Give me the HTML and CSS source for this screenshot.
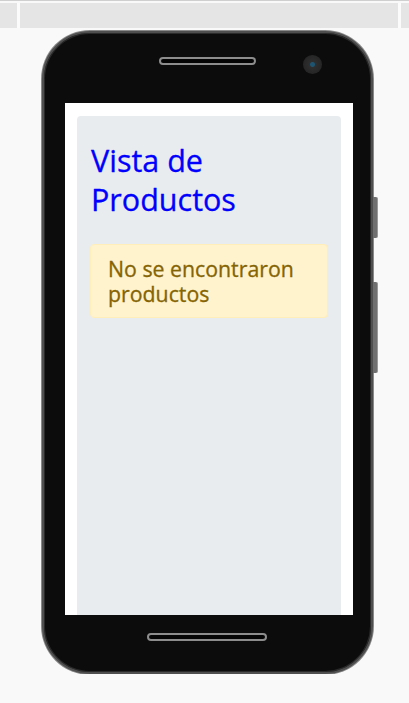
FILE: index.html
```html
<!DOCTYPE html>
<html lang="es">
<head>
    <meta charset="UTF-8">
    <meta name="viewport" content="width=device-width, initial-scale=1.0">
    <title>Vista de Productos</title>
    <link rel="stylesheet" href="styles.css">
</head>
<body>
    <!-- Device toolbar strip -->
    <div class="toolbar">
        <div class="toolbar-bar"></div>
    </div>

    <!-- Phone mockup -->
    <div class="stage">
        <div class="phone">
            <span class="speaker top"></span>
            <span class="camera"></span>
            <span class="side-btn volume"></span>
            <span class="side-btn power"></span>

            <div class="screen">
                <div class="jumbotron">
                    <h1 class="title">Vista de Productos</h1>
                    <div class="alert">No se encontraron productos</div>
                </div>
            </div>

            <span class="speaker bottom"></span>
        </div>
    </div>
</body>
</html>
```

FILE: styles.css
```css
body {
    margin: 0;
    background-color: #f9f9f9;
    font-family: 'Open Sans', 'Noto Sans', sans-serif;
}
.toolbar {
    border-top: 1px solid #cfcfcf;
    padding-top: 2px;
}
.toolbar-bar {
    height: 25px;
    background-color: #e5e5e5;
    border-left: 3px solid #fbfbfb;
    border-right: 3px solid #fbfbfb;
    margin: 0 8px 0 17px;
    box-shadow: -17px 0 0 #e5e5e5, 8px 0 0 #e5e5e5;
}
.stage {
    padding: 3px 0 0 42px;
}
.phone {
    position: relative;
    box-sizing: border-box;
    width: 331px;
    height: 643px;
    padding: 70px 18px 57px 21px;
    background-color: #0c0c0c;
    border: 2px solid #4f4f4f;
    border-radius: 48px;
    box-shadow: 0 0 0 1px #8a8a8a, inset 0 0 0 1px #2a2a2a;
}
.speaker {
    display: block;
    position: absolute;
    height: 8px;
    box-sizing: border-box;
    border: 2px solid #8d8d8d;
    border-radius: 5px;
    background-color: #050505;
}
.speaker.top {
    top: 24px;
    left: 115px;
    width: 97px;
}
.speaker.bottom {
    bottom: 31px;
    left: 103px;
    width: 120px;
}
.camera {
    position: absolute;
    top: 22px;
    left: 259px;
    width: 19px;
    height: 19px;
    border-radius: 50%;
    background: radial-gradient(circle, #1e5470 0 2px, #2e2e2e 3px, #262626 9px);
}
.side-btn {
    position: absolute;
    right: -7px;
    width: 4px;
    background-color: #6f6f6f;
    border-radius: 0 2px 2px 0;
    border-right: 1px solid #999;
}
.side-btn.volume {
    top: 164px;
    height: 41px;
}
.side-btn.power {
    top: 249px;
    height: 91px;
}
.screen {
    display: flex;
    flex-direction: column;
    height: 512px;
    background-color: #ffffff;
    padding: 13px 12px 0 12px;
    box-sizing: border-box;
}
.jumbotron {
    flex: 1;
    background-color: #e9ecef;
    border-radius: 4px 4px 0 0;
    padding: 25px 13px 0 13px;
}
.title {
    margin: 0 0 25px 1px;
    font-weight: 400;
    font-size: 30.5px;
    line-height: 39px;
    color: #0000ff;
    width: 160px;
    -webkit-text-stroke: 0.3px #0000ff;
}
.alert {
    background-color: #fff3cd;
    border: 1px solid #ffeeba;
    border-radius: 4px;
    color: #856404;
    font-weight: 400;
    font-size: 21.3px;
    line-height: 25px;
    padding: 11px 10px 11px 17px;
    -webkit-text-stroke: 0.3px #856404;
}
```
